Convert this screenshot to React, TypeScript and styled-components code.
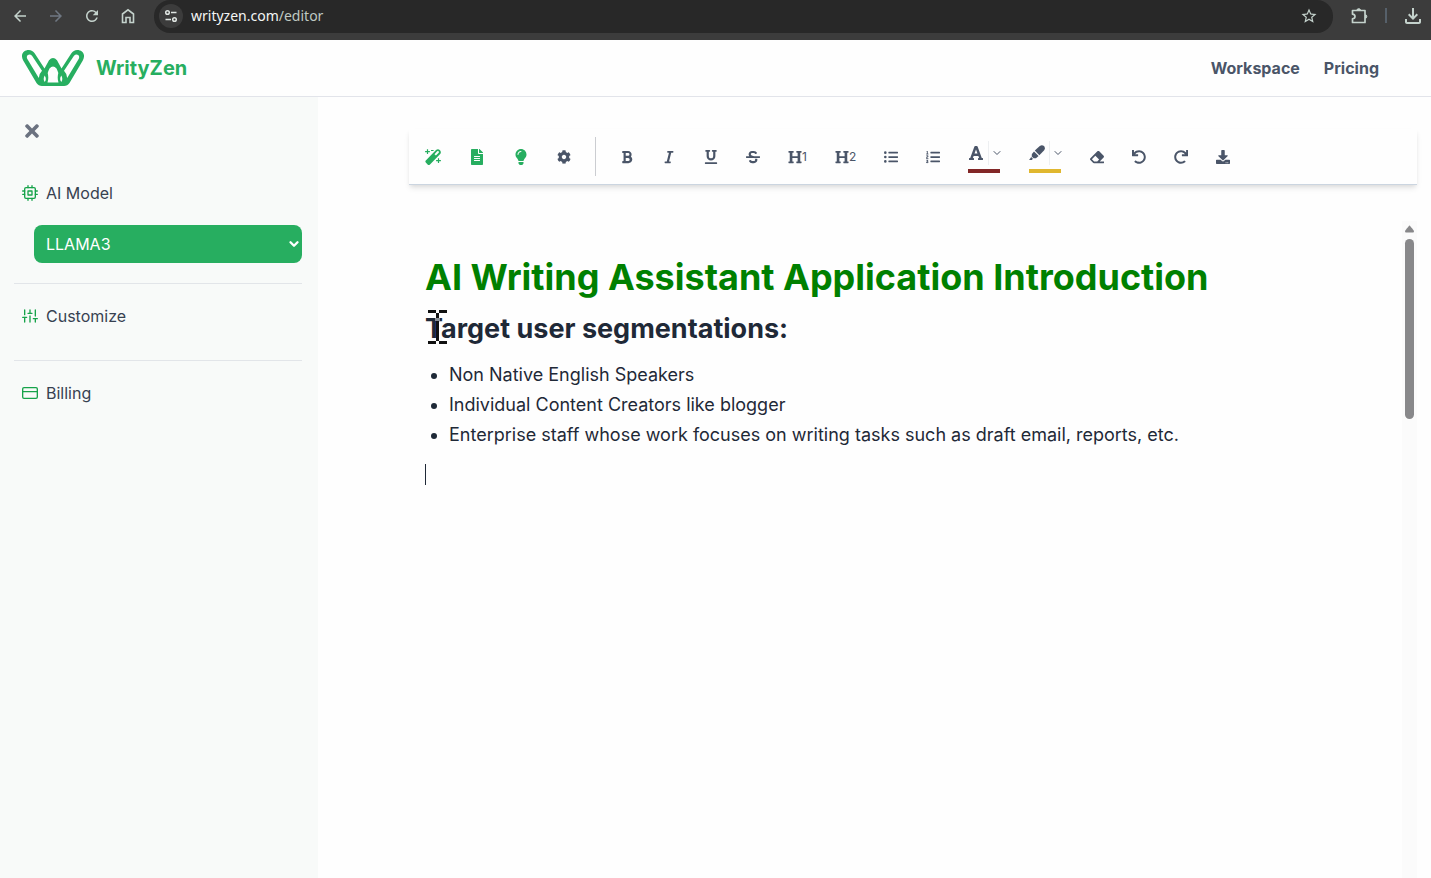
import React from "react";
import styled, { createGlobalStyle } from "styled-components";
import { FaBold, FaItalic, FaUnderline, FaStrikethrough, FaHeading, FaListUl, FaListOl, FaFont, FaEraser, FaUndo, FaRedo, FaDownload, FaFileAlt, FaLightbulb, FaCog, FaTimes } from "react-icons/fa";
import { FiCpu, FiSliders, FiCreditCard, FiChevronDown } from "react-icons/fi";
import { MdArrowBack, MdArrowForward, MdRefresh, MdStarBorder, MdOutlineFileDownload } from "react-icons/md";

const green = "#27ae60";
const slate = "#4a5568";

const GlobalStyle = createGlobalStyle`
  *, *::before, *::after { box-sizing: border-box; }
  body { margin: 0; background: #fefefe; font-family: Inter, "Liberation Sans", sans-serif; color: #1f2937; }
  button, select { font: inherit; color: inherit; }
  h1, h2, ul { margin: 0; }
`;

const Page = styled.div`
  min-height: 100vh;
  display: flex;
  flex-direction: column;
`;

const BrowserBar = styled.div`
  display: flex;
  align-items: flex-start;
  height: 40px;
  padding-left: 2px;
  background: #3c3c3c;
  color: #c4d2cc;
`;

const ChromeButton = styled.button<{ $dim?: boolean }>`
  display: flex;
  align-items: center;
  justify-content: center;
  width: 36px;
  height: 32px;
  padding: 0;
  border: 0;
  background: none;
  color: ${(p) => (p.$dim ? "#6f7782" : "inherit")};
`;

const AddressBar = styled.div`
  flex: 1;
  display: flex;
  align-items: center;
  gap: 8px;
  height: 33px;
  margin: 0 8px;
  padding: 0 6px 1px 5px;
  border-radius: 16px;
  background: #282828;
`;

const SiteInfo = styled.button`
  display: flex;
  align-items: center;
  justify-content: center;
  width: 24px;
  height: 24px;
  padding: 0;
  border: 0;
  border-radius: 12px;
  background: #3c3c3c;
  color: #dfe5e2;
`;

const Url = styled.span`
  flex: 1;
  font: 14px/20px "Noto Sans", sans-serif;
  color: #bfc9c2;
  b { font-weight: 400; color: #f4f6f5; }
`;

const ChromeRule = styled.span`
  width: 2px;
  height: 15px;
  margin: 8px 8px 0;
  background: #56606a;
`;

const Header = styled.header`
  display: flex;
  align-items: center;
  justify-content: space-between;
  height: 57px;
  padding: 0 52px 0 22px;
  border-bottom: 1px solid #e2e4ea;
  background: #fefefe;
`;

const Brand = styled.a`
  display: flex;
  align-items: center;
  gap: 12px;
  font-size: 20px;
  line-height: 28px;
  font-weight: 700;
  color: ${green};
  text-decoration: none;
`;

const Nav = styled.nav`
  display: flex;
  gap: 24px;
  a {
    font-size: 16px;
    line-height: 24px;
    font-weight: 700;
    color: ${slate};
    text-decoration: none;
  }
`;

const Body = styled.div`
  flex: 1;
  display: flex;
`;

const Sidebar = styled.aside`
  flex: none;
  width: 318px;
  padding: 24px 16px 0 14px;
  background: #f8faf9;
`;

const CloseButton = styled.button`
  display: block;
  margin: 0 0 40px 8px;
  padding: 0;
  border: 0;
  background: none;
  color: #6b7280;
  svg { display: block; }
`;

const Section = styled.section`
  & + & { border-top: 1px solid #e2e5e9; }
`;

const SideLabel = styled.label`
  display: flex;
  align-items: center;
  gap: 8px;
  padding-left: 8px;
  font-size: 16px;
  line-height: 24px;
  color: #374151;
  svg { color: #16a34a; }
`;

const SideLink = styled.a<{ $space: number }>`
  display: flex;
  align-items: center;
  gap: 8px;
  padding: 20px 8px ${(p) => p.$space}px;
  font-size: 16px;
  line-height: 24px;
  color: #374151;
  text-decoration: none;
  svg { color: #16a34a; }
`;

const SelectWrap = styled.div`
  position: relative;
  margin: 20px 0 20px 20px;
  svg {
    position: absolute;
    right: 1px;
    top: 12px;
    color: #fff;
    pointer-events: none;
  }
`;

const ModelSelect = styled.select`
  display: block;
  width: 100%;
  height: 38px;
  padding: 0 12px;
  border: 0;
  border-radius: 8px;
  appearance: none;
  background: ${green};
  color: #fff;
  font-size: 16px;
`;

const Main = styled.main`
  flex: 1;
  min-width: 0;
  display: flex;
  flex-direction: column;
  padding: 32px 14px 0 91px;
`;

const Toolbar = styled.div`
  display: flex;
  align-items: center;
  gap: 16px;
  height: 56px;
  padding: 0 10px;
  border-bottom: 1px solid #cbd5e0;
  background: #fefefe;
  box-shadow: 0 4px 6px -1px rgba(0, 0, 0, 0.1), 0 2px 4px -1px rgba(0, 0, 0, 0.06);
`;

const ToolButton = styled.button<{ $accent?: boolean }>`
  display: flex;
  align-items: center;
  padding: 6px;
  border: 0;
  background: none;
  color: ${(p) => (p.$accent ? green : slate)};
  font-size: 12px;
  line-height: 16px;
  svg { display: block; }
`;

const ToolRule = styled.span`
  width: 1px;
  height: 39px;
  margin: 0 2px;
  background: #cbcdd1;
`;

const ColorTool = styled.div<{ $color: string }>`
  width: 32px;
  margin: 0 7px 0 6px;
  border-bottom: 4px solid ${(p) => p.$color};
  color: ${slate};
`;

const ColorRow = styled.div`
  display: flex;
  height: 28px;
  button {
    display: flex;
    flex: none;
    padding: 4px 0 0;
    border: 0;
    background: none;
  }
  button + button {
    height: 24px;
    margin-left: 4px;
    padding: 6px 0 0 2px;
    border-left: 1px solid #edeff1;
  }
`;

const EditorFrame = styled.div`
  flex: 1;
  display: flex;
  margin-top: 36px;
`;

const Document = styled.article`
  flex: 1;
  min-width: 0;
  padding: 32px 16px;
  font-size: 18px;
  line-height: 30px;
  h1 { font-size: 36px; line-height: 48px; font-weight: 700; color: green; }
  h2 { font-size: 27px; line-height: 42px; font-weight: 700; }
  ul { margin-top: 10px; padding-left: 24px; }
`;

const Caret = styled.div`
  width: 1px;
  height: 21px;
  margin-top: 14px;
  background: #1f2937;
`;

const HeadingLine = styled.div`
  position: relative;
  margin-top: 7px;
  svg { position: absolute; left: 3px; top: 1px; }
`;

const ScrollTrack = styled.div`
  width: 15px;
  padding: 4px 3px;
  background: #fbfbfb;
`;

const ScrollArrow = styled.svg`
  display: block;
`;

const ScrollThumb = styled.div`
  width: 9px;
  height: 180px;
  margin-top: 6px;
  border-radius: 5px;
  background: #88888a;
`;

const Logo = () => (
  <svg width="62" height="36" viewBox="0 0 62 36" fill={green} fillRule="evenodd" aria-hidden="true">
    <path d="M1.200 10.500C-2 4.500 1.500 0 6.800 0Q10.500 0 12.800 3.500L22.500 18.500L27 10.300Q31 5.500 35 10.300L39.500 18.500L49.200 3.500Q51.500 0 55.200 0C60.500 0 64 4.500 60.800 10.500L47.500 33Q45.500 36 42 36H20Q16.500 36 14.500 33Z
      M5.200 8.800L16.800 28Q17.200 23.500 20 20.800L10 5.800Q8.500 4.200 6.500 4.700Q4 5.500 5.200 8.800Z
      M56.800 8.800L45.200 28Q44.800 23.500 42 20.800L52 5.800Q53.500 4.200 55.500 4.700Q58 5.500 56.800 8.800Z
      M27.500 18.500Q31 14.500 34.500 18.500Q35.500 20.500 36.300 23Q35 28 36.500 32.500H25.500Q27 28 25.700 23Q26.500 20.500 27.500 18.500Z
      M22.700 25.500Q25 29 22.700 32Q20.700 29 22.700 25.500Z
      M39.300 25.500Q37 29 39.300 32Q41.300 29 39.300 25.500Z" />
  </svg>
);

const TuneIcon = () => (
  <svg width="14" height="14" viewBox="0 0 14 14" fill="none" stroke="currentColor" strokeWidth="1.5" aria-hidden="true">
    <circle cx="3.5" cy="3.5" r="1.8" />
    <path d="M7 3.500h5.500M1.500 10.500H7" />
    <circle cx="10.5" cy="10.5" r="1.8" />
  </svg>
);

const HomeIcon = () => (
  <svg width="14" height="16" viewBox="0 0 14 16" fill="none" stroke="currentColor" strokeWidth="1.6" aria-hidden="true">
    <path d="M1.500 14.500V6L7 1.800L12.500 6V14.500H9V9.500H5V14.500Z" />
  </svg>
);

const PuzzleIcon = () => (
  <svg width="18" height="18" viewBox="0 0 18 18" fill="none" stroke="currentColor" strokeWidth="1.7" strokeLinejoin="round" aria-hidden="true">
    <path d="M2.500 3.500H15V15.500H2.500V11.800Q5 11.500 5 9.500Q5 7.500 2.500 7.200Z" />
    <path d="M7 3A1.700 1.300 0 0 1 10.400 3ZM15.500 7.800A1.300 1.700 0 0 1 15.500 11.200Z" fill="currentColor" strokeWidth="1" />
  </svg>
);

const WandIcon = () => (
  <svg width="16" height="16" viewBox="0 0 16 16" fill="currentColor" fillRule="evenodd" aria-hidden="true">
    <path d="M.8 11.500L11 .9Q13.200 -.6 15 1.200Q16.600 3 15.200 5L5 15.400Q3.800 16.400 2.600 15.400L.8 13.600Q-.1 12.500 .8 11.500ZM9.500 5.200L10.900 6.600L13.700 3.800Q14.300 3 13.600 2.300Q12.900 1.700 12.200 2.300Z" />
    <path d="M1.900 .2H3.100V2H4.900V3.200H3.100V5H1.900V3.200H.1V2H1.900ZM12.900 9.200H14.100V11H15.900V12.200H14.100V14H12.900V12.200H11.100V11H12.900ZM6 .9H8.600V2.100H6Z" />
  </svg>
);

const MarkerIcon = () => (
  <svg width="16" height="16" viewBox="0 0 16 16" fill="currentColor" aria-hidden="true">
    <path d="M5.800 5.600L10.800 .9Q13 -.4 15 1Q16.600 3 15.200 5.200L10.400 10.200Z" />
    <path d="M5 6.400L9.600 11L7 13.200L4.600 13.300L2.700 11.400L2.900 9Z" />
    <path d="M2.200 12.100L3.900 13.800L2.800 15H.1Z" />
  </svg>
);

const IBeam = () => (
  <svg width="20" height="36" viewBox="0 0 20 36" fill="#111" aria-hidden="true">
    <path d="M0 1h8v3H0zM11 1h8v3h-8zM8 4h3v28H8zM0 32h8v3H0zM11 32h8v3h-8z" />
    <path d="M7 9h5v3H7z" fill="#8b9096" />
  </svg>
);

export default function App() {
  return (
    <>
      <GlobalStyle />
      <Page>
        <BrowserBar>
          <ChromeButton aria-label="Back"><MdArrowBack size={18} /></ChromeButton>
          <ChromeButton $dim aria-label="Forward"><MdArrowForward size={18} /></ChromeButton>
          <ChromeButton aria-label="Reload"><MdRefresh size={18} /></ChromeButton>
          <ChromeButton aria-label="Home"><HomeIcon /></ChromeButton>
          <AddressBar>
            <SiteInfo aria-label="Site information"><TuneIcon /></SiteInfo>
            <Url><b>writyzen.com</b>/editor</Url>
            <ChromeButton aria-label="Bookmark"><MdStarBorder size={18} /></ChromeButton>
          </AddressBar>
          <ChromeButton aria-label="Extensions"><PuzzleIcon /></ChromeButton>
          <ChromeRule />
          <ChromeButton aria-label="Downloads"><MdOutlineFileDownload size={24} /></ChromeButton>
        </BrowserBar>
        <Header>
          <Brand href="#"><Logo />WrityZen</Brand>
          <Nav><a href="#workspace">Workspace</a><a href="#pricing">Pricing</a></Nav>
        </Header>
        <Body>
          <Sidebar>
            <CloseButton aria-label="Close sidebar"><FaTimes size={20} /></CloseButton>
            <Section>
              <SideLabel htmlFor="model"><FiCpu size={16} />AI Model</SideLabel>
              <SelectWrap>
                <ModelSelect id="model"><option>LLAMA3</option></ModelSelect>
                <FiChevronDown size={14} strokeWidth={4} />
              </SelectWrap>
            </Section>
            <Section><SideLink href="#customize" $space={32}><FiSliders size={16} />Customize</SideLink></Section>
            <Section><SideLink href="#billing" $space={20}><FiCreditCard size={16} />Billing</SideLink></Section>
          </Sidebar>
          <Main>
            <Toolbar role="toolbar">
              <ToolButton $accent aria-label="Generate"><WandIcon /></ToolButton>
              <ToolButton $accent aria-label="Summarize"><FaFileAlt size={16} /></ToolButton>
              <ToolButton $accent aria-label="Ideas"><FaLightbulb size={16} /></ToolButton>
              <ToolButton aria-label="Settings"><FaCog size={14} /></ToolButton>
              <ToolRule />
              <ToolButton aria-label="Bold"><FaBold size={14} /></ToolButton>
              <ToolButton aria-label="Italic"><FaItalic size={14} /></ToolButton>
              <ToolButton aria-label="Underline"><FaUnderline size={14} /></ToolButton>
              <ToolButton aria-label="Strikethrough"><FaStrikethrough size={14} /></ToolButton>
              <ToolButton><FaHeading size={14} />1</ToolButton>
              <ToolButton><FaHeading size={14} />2</ToolButton>
              <ToolButton aria-label="Bulleted list"><FaListUl size={14} /></ToolButton>
              <ToolButton aria-label="Numbered list"><FaListOl size={14} /></ToolButton>
              <ColorTool $color="#822727">
                <ColorRow>
                  <button aria-label="Text color"><FaFont size={16} /></button>
                  <button aria-label="Choose text color"><FiChevronDown size={12} /></button>
                </ColorRow>
              </ColorTool>
              <ColorTool $color="#e0b72f">
                <ColorRow>
                  <button aria-label="Highlight"><MarkerIcon /></button>
                  <button aria-label="Choose highlight color"><FiChevronDown size={12} /></button>
                </ColorRow>
              </ColorTool>
              <ToolButton aria-label="Clear formatting"><FaEraser size={14} /></ToolButton>
              <ToolButton aria-label="Undo"><FaUndo size={14} /></ToolButton>
              <ToolButton aria-label="Redo"><FaRedo size={14} /></ToolButton>
              <ToolButton aria-label="Download"><FaDownload size={14} /></ToolButton>
            </Toolbar>
            <EditorFrame>
              <Document>
                <h1>AI Writing Assistant Application Introduction</h1>
                <HeadingLine><h2>Target user segmentations:</h2><IBeam /></HeadingLine>
                <ul>
                  <li>Non Native English Speakers</li>
                  <li>Individual Content Creators like blogger</li>
                  <li>Enterprise staff whose work focuses on writing tasks such as draft email, reports, etc.</li>
                </ul>
                <Caret />
              </Document>
              <ScrollTrack>
                <ScrollArrow width="9" height="8" viewBox="0 0 9 8" fill="#88888a"><path d="M4.500 0.500Q5 .5 9 6Q9 7.500 8 7.500H1Q0 7.500 0 6Q4 .5 4.500 .5Z" /></ScrollArrow>
                <ScrollThumb />
              </ScrollTrack>
            </EditorFrame>
          </Main>
        </Body>
      </Page>
    </>
  );
}
